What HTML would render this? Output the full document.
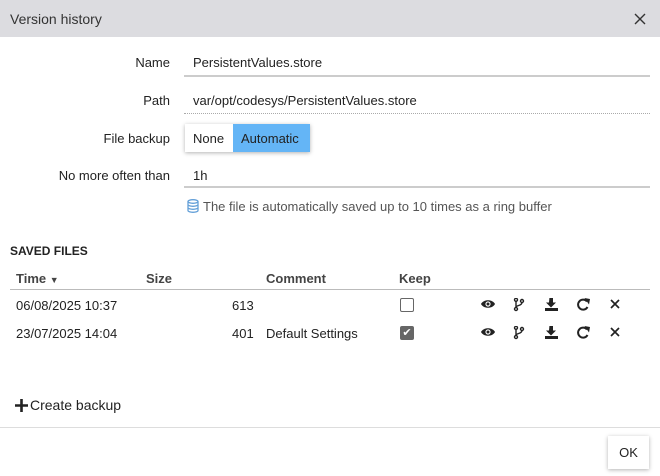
<!DOCTYPE html>
<html><head><style>
*{margin:0;padding:0;box-sizing:border-box}
body{width:660px;height:476px;background:#fff;font-family:"Liberation Sans",sans-serif;font-size:13px;color:#222;position:relative;overflow:hidden}
.a{position:absolute;white-space:nowrap}
.lbl{position:absolute;right:490px;white-space:nowrap}
.line{position:absolute;left:184px;width:466px;height:0}
.ic{position:absolute}
</style></head><body>
<div class="a" style="left:0;top:0;width:660px;height:37px;background:#dcdce0"></div>
<div class="a" style="left:10px;top:11px;font-size:14px;color:#333">Version history</div>
<svg class="ic" style="left:634px;top:13px" width="12" height="12"><path d="M1 1l10 10M11 1L1 11" stroke="#333" stroke-width="1.4"/></svg>

<div class="lbl" style="top:55px">Name</div>
<div class="a" style="left:193px;top:55px">PersistentValues.store</div>
<div class="line" style="top:75px;border-top:2px solid #ccc"></div>

<div class="lbl" style="top:93px">Path</div>
<div class="a" style="left:193px;top:93px">var/opt/codesys/PersistentValues.store</div>
<div class="line" style="top:113px;border-top:1px dotted #aaa"></div>

<div class="lbl" style="top:131px">File backup</div>
<div class="a" style="left:185px;top:124px;width:125px;height:28px;box-shadow:0 1px 4px rgba(0,0,0,.3);display:flex">
<div style="width:48px;background:#fff;padding:7px 0 0 8px">None</div>
<div style="flex:1;background:#64b5f6;padding:7px 0 0 8px">Automatic</div></div>

<div class="lbl" style="top:168px">No more often than</div>
<div class="a" style="left:193px;top:168px">1h</div>
<div class="line" style="top:186px;border-top:2px solid #ccc"></div>

<svg class="ic" style="left:187px;top:199px" width="12" height="14" viewBox="0 0 12 14"><g fill="none" stroke="#64a0d8" stroke-width="1.3"><ellipse cx="6" cy="2.5" rx="5" ry="1.8"/><path d="M1 2.5v9c0 1 2.2 1.8 5 1.8s5-.8 5-1.8v-9M1 5.5c0 1 2.2 1.8 5 1.8s5-.8 5-1.8M1 8.5c0 1 2.2 1.8 5 1.8s5-.8 5-1.8"/></g></svg>
<div class="a" style="left:203px;top:199px;color:#555">The file is automatically saved up to 10 times as a ring buffer</div>

<div class="a" style="left:10px;top:244px;font-weight:bold;font-size:12px;color:#222">SAVED FILES</div>
<div class="a" style="left:16px;top:271px;font-weight:bold;color:#444">Time <span style="font-size:9px">▼</span></div>
<div class="a" style="left:146px;top:271px;font-weight:bold;color:#444">Size</div>
<div class="a" style="left:266px;top:271px;font-weight:bold;color:#444">Comment</div>
<div class="a" style="left:399px;top:271px;font-weight:bold;color:#444">Keep</div>
<div class="a" style="left:10px;top:289px;width:640px;border-top:1px solid #bbb"></div>

<div class="a" style="left:16px;top:298px">06/08/2025 10:37</div>
<div class="a" style="left:232px;top:298px">613</div>
<div class="a" style="left:400px;top:298px;width:14px;height:14px;border:1px solid #666;border-radius:2px"></div>

<div class="a" style="left:16px;top:326px">23/07/2025 14:04</div>
<div class="a" style="left:232px;top:326px">401</div>
<div class="a" style="left:266px;top:326px">Default Settings</div>
<div class="a" style="left:400px;top:326px;width:14px;height:14px;background:#666;border-radius:2px;color:#fff;font-size:11px;line-height:14px;text-align:center">✔</div>

<svg width="0" height="0" style="position:absolute"><defs>
<g id="row">
<path d="M0 6c2.5-5 11.5-5 14 0c-2.5 5-11.5 5-14 0z" fill="#222"/><circle cx="7" cy="6" r="2.6" fill="#fff"/><circle cx="7" cy="6" r="1.5" fill="#222"/>
<g transform="translate(33,0)" fill="none" stroke="#222" stroke-width="1.4"><circle cx="2" cy="1.8" r="1.5"/><circle cx="8" cy="3" r="1.5"/><circle cx="2" cy="11" r="1.5"/><path d="M2 3.3v6M8 4.5c0 3.5-6 2.5-6 5"/></g>
<g transform="translate(64,-1)" fill="#222"><path d="M4.5 0h3.5v5.5h3l-5 5-5-5h3z"/><rect x="0" y="11" width="13" height="3"/></g>
<g transform="translate(96,0)"><path d="M10 3.5A5 5 0 1 0 10.5 9" fill="none" stroke="#222" stroke-width="2"/><path d="M7.5 0l5.5 1-1 5.5z" fill="#222"/></g>
<path d="M130 2l8 8M138 2l-8 8" stroke="#222" stroke-width="1.7"/>
</g></defs></svg>
<svg class="ic" style="left:481px;top:298px" width="150" height="15"><use href="#row"/></svg>
<svg class="ic" style="left:481px;top:326px" width="150" height="15"><use href="#row"/></svg>

<svg class="ic" style="left:15px;top:399px" width="13" height="13"><path d="M6.5 0v13M0 6.5h13" stroke="#222" stroke-width="2.6"/></svg>
<div class="a" style="left:30px;top:397px;font-size:14px">Create backup</div>
<div class="a" style="left:0;top:427px;width:660px;border-top:1px solid #ddd"></div>
<div class="a" style="left:608px;top:436px;width:41px;height:33px;box-shadow:0 1px 4px rgba(0,0,0,.3);background:#fff;text-align:center;line-height:33px">OK</div>
</body></html>
